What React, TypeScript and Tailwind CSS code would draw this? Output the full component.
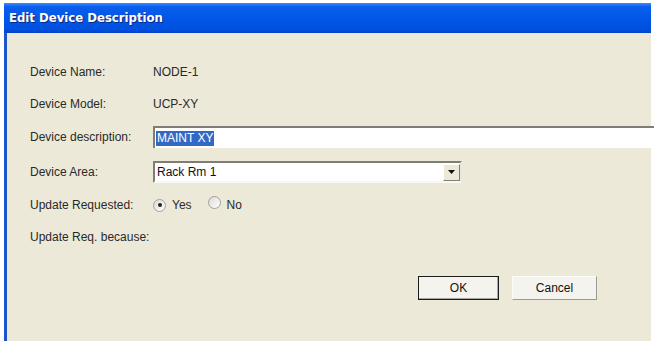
import React from "react";

const font = { fontFamily: '"Liberation Sans", Arial, sans-serif' };
const titleFont = {
  fontFamily: '"DejaVu Sans Condensed", "Liberation Sans", sans-serif',
};

function Radio({ checked }: { checked?: boolean }) {
  return (
    <span className="relative inline-flex h-[13px] w-[13px] items-center justify-center rounded-full border border-[#a2a09a] bg-[linear-gradient(135deg,#dcdad2,#ffffff)]">
      {checked && <span className="h-[4px] w-[4px] rounded-full bg-[#222]" />}
    </span>
  );
}

function Row({ label, children }: { label: string; children?: React.ReactNode }) {
  return (
    <div className="flex h-[22px] items-center">
      <div className="w-[123px] shrink-0">{label}</div>
      {children}
    </div>
  );
}

export default function App() {
  return (
    <div className="h-[346px] w-[654px] overflow-hidden bg-white pt-[3px] pl-[4px]" style={font}>
      <div className="flex h-[338px] w-[647px] flex-col">
        {/* Title bar */}
        <div className="flex h-[30px] items-center bg-[linear-gradient(#3d8bff_0%,#0a5eee_12%,#0055e6_60%,#0050de_88%,#0042c8_100%)] pl-[5px]">
          <span
            className="text-[13px] font-bold text-white [text-shadow:1px_1px_0_#0a2a80]"
            style={titleFont}
          >
            Edit Device Description
          </span>
        </div>
        {/* Body */}
        <div className="flex flex-1 border-l-[3px] border-l-[#1d55c8] bg-[#ece9d8] text-[12px] text-[#2a2a2a]">
          <div className="flex flex-1 flex-col pl-[23px] pt-[28px]">
            <Row label="Device Name:">
              <span>NODE-1</span>
            </Row>
            <div className="h-[10px]" />
            <Row label="Device Model:">
              <span>UCP-XY</span>
            </Row>
            <div className="h-[11px]" />
            <Row label="Device description:">
              <div className="-mr-[20px] flex h-[22px] flex-1 items-center border-t-2 border-l-2 border-t-[#7f7d75] border-l-[#7f7d75] bg-white pl-[1px]">
                <span className="bg-[#316ac5] px-[1px] leading-[15px] text-white">MAINT XY</span>
              </div>
            </Row>
            <div className="h-[13px]" />
            <Row label="Device Area:">
              <div className="flex h-[22px] w-[309px] items-center border-2 border-t-[#7f7d75] border-l-[#7f7d75] border-r-[#e8e6df] border-b-[#f8f8f4] bg-white">
                <span className="flex-1 pl-[2px] text-[#111]">Rack Rm 1</span>
                <span className="flex h-[17px] w-[17px] items-center justify-center border border-t-white border-l-white border-r-[#7f7d75] border-b-[#7f7d75] bg-[#ece9d8]">
                  <svg width="7" height="4" viewBox="0 0 7 4">
                    <path d="M0 0H7L3.5 4Z" fill="#111" />
                  </svg>
                </span>
              </div>
            </Row>
            <div className="h-[11px]" />
            <Row label="Update Requested:">
              <div className="flex items-center">
                <Radio checked />
                <span className="ml-[6px]">Yes</span>
                <span className="ml-[16px]">
                  <Radio />
                </span>
                <span className="ml-[6px]">No</span>
              </div>
            </Row>
            <div className="h-[10px]" />
            <Row label="Update Req. because:" />
            <div className="mt-[28px] flex pl-[388px]">
              <button className="flex h-[24px] w-[81px] items-center justify-center border border-[#1b1b1b] bg-[#f4f3ee] text-[12px] text-[#111] shadow-[inset_-1px_-1px_0_#a7a69f]">
                OK
              </button>
              <button className="ml-[13px] flex h-[24px] w-[85px] items-center justify-center border border-t-[#fcfcfa] border-l-[#fcfcfa] border-r-[#9b9a93] border-b-[#9b9a93] bg-[#f4f3ee] text-[12px] text-[#111]">
                Cancel
              </button>
            </div>
          </div>
        </div>
      </div>
    </div>
  );
}
